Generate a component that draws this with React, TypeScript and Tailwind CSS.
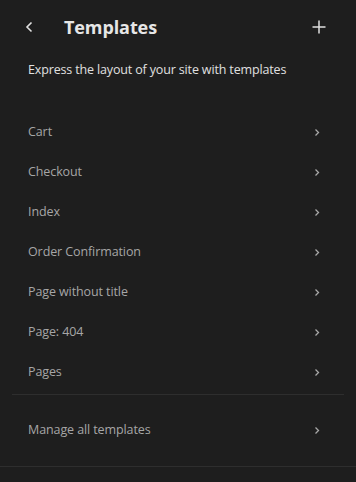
const templates = [
  'Cart',
  'Checkout',
  'Index',
  'Order Confirmation',
  'Page without title',
  'Page: 404',
  'Pages',
];

function Chevron() {
  return (
    <svg width="6" height="9" viewBox="0 0 6 9" fill="none" className="shrink-0">
      <path d="M1.5 1.5 L4.5 4.5 L1.5 7.5" stroke="#a8a8a8" strokeWidth="1.3" />
    </svg>
  );
}

function NavItem({ label }: { label: string }) {
  return (
    <div className="flex items-center justify-between h-10 pl-7 pr-9 text-[12.5px] text-[#a6a6a6] tracking-[-0.1px]">
      <span>{label}</span>
      <Chevron />
    </div>
  );
}

export default function App() {
  return (
    <div
      className="w-[356px] h-[482px] bg-[#1e1e1e] overflow-hidden"
      style={{ fontFamily: '"Open Sans", "Noto Sans", sans-serif' }}
    >
      {/* Header */}
      <div className="flex items-center h-[54px] pl-6 pr-[30px]">
        <svg width="12" height="14" viewBox="0 0 12 14" fill="none">
          <path d="M7.5 2.5 L3 7 L7.5 11.5" stroke="#e0e0e0" strokeWidth="1.6" />
        </svg>
        <h1 className="ml-7 text-[18px] font-bold text-[#e6e6e6] tracking-[-0.1px]">Templates</h1>
        <svg width="14" height="14" viewBox="0 0 14 14" className="ml-auto">
          <path d="M7 0.5 V13.5 M0.5 7 H13.5" stroke="#e0e0e0" strokeWidth="1.5" />
        </svg>
      </div>

      <p className="px-7 mt-[7px] text-[12.5px] text-[#e0e0e0] tracking-[-0.15px]">
        Express the layout of your site with templates
      </p>

      <div className="mt-[33px]">
        {templates.map((t) => (
          <NavItem key={t} label={t} />
        ))}
      </div>

      <div className="mx-3 mt-[1px] border-t border-[#2e2e2e]" />

      <div className="mt-4">
        <NavItem label="Manage all templates" />
      </div>

      <div className="mt-[15px] border-t border-[#2e2e2e]" />
    </div>
  );
}
